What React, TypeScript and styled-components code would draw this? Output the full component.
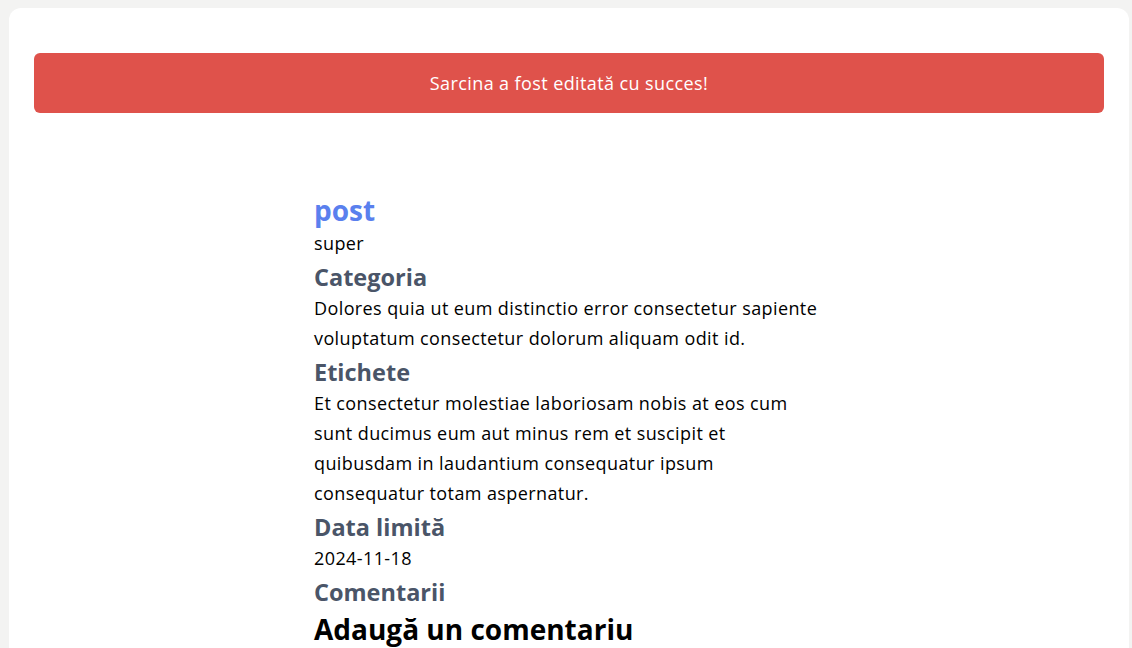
import styled, { createGlobalStyle } from 'styled-components';

const GlobalStyle = createGlobalStyle`
  body {
    margin: 0;
    padding: 8px 3px 0 9px;
    background-color: #f3f3f2;
    font-family: "Segoe UI", "Open Sans", "Noto Sans", sans-serif;
    color: #000;
  }
`;

const Card = styled.div`
  width: 1120px;
  min-height: 700px;
  box-sizing: border-box;
  padding: 45px 25px 0;
  background-color: #fff;
  border-radius: 12px;
`;

const Alert = styled.div`
  height: 60px;
  display: flex;
  align-items: center;
  justify-content: center;
  background-color: #df524b;
  border-radius: 6px;
  color: #fff;
  font-size: 18px;
  letter-spacing: 0.4px;
`;

const Task = styled.div`
  width: 510px;
  margin: 79px auto 0;
  display: flex;
  flex-direction: column;
`;

const Title = styled.h1`
  margin: 0;
  font-size: 28px;
  line-height: 36px;
  font-weight: 700;
  color: #5a80ee;
`;

const Heading = styled.h2<{ $dark?: boolean; $big?: boolean }>`
  margin: 3px 0 0;
  font-size: ${(p) => (p.$big ? '28px' : '23.5px')};
  line-height: ${(p) => (p.$big ? '36px' : '32px')};
  font-weight: 700;
  color: ${(p) => (p.$dark ? '#000' : '#4a5568')};
`;

const Text = styled.p`
  margin: 0;
  font-size: 18px;
  line-height: 30px;
  letter-spacing: 0.4px;
`;

export default function App() {
  return (
    <>
      <GlobalStyle />
      <Card>
        <Alert>Sarcina a fost editată cu succes!</Alert>
        <Task>
          <Title>post</Title>
          <Text>super</Text>
          <Heading>Categoria</Heading>
          <Text>
            Dolores quia ut eum distinctio error consectetur sapiente voluptatum consectetur dolorum
            aliquam odit id.
          </Text>
          <Heading>Etichete</Heading>
          <Text>
            Et consectetur molestiae laboriosam nobis at eos cum sunt ducimus eum aut minus rem et
            suscipit et quibusdam in laudantium consequatur ipsum consequatur totam aspernatur.
          </Text>
          <Heading>Data limită</Heading>
          <Text>2024-11-18</Text>
          <Heading>Comentarii</Heading>
          <Heading $dark $big>
            Adaugă un comentariu
          </Heading>
        </Task>
      </Card>
    </>
  );
}
